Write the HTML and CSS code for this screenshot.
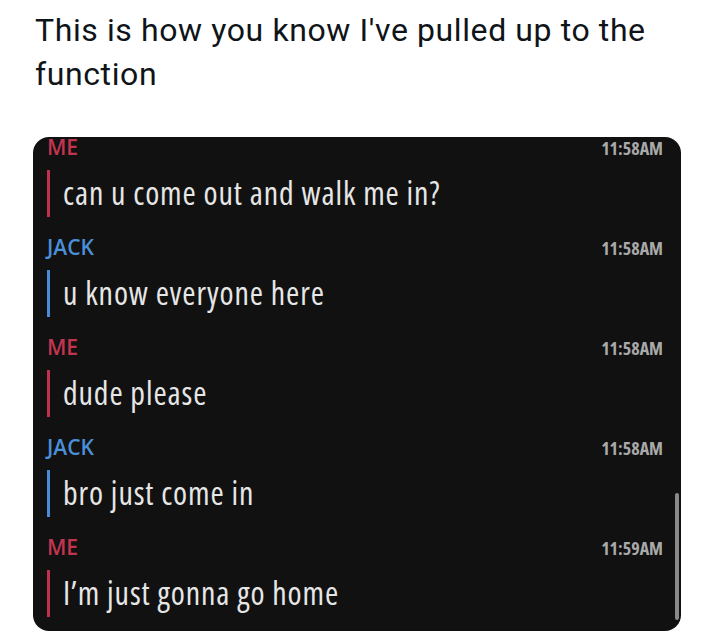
FILE: index.html
```html
<!DOCTYPE html>
<html lang="en">
<head>
    <meta charset="UTF-8">
    <meta name="viewport" content="width=device-width, initial-scale=1.0">
    <title>Pulled up to the function</title>
    <link rel="stylesheet" href="styles.css">
</head>
<body>

<p class="post-text">This is how you know I've pulled up to the function</p>

<!-- Screenshot of the chat -->
<div class="chat">
    <div class="msg me">
        <div class="msg-head"><span class="name">ME</span><span class="time">11:58AM</span></div>
        <p class="msg-body">can u come out and walk me in?</p>
    </div>
    <div class="msg jack">
        <div class="msg-head"><span class="name">JACK</span><span class="time">11:58AM</span></div>
        <p class="msg-body">u know everyone here</p>
    </div>
    <div class="msg me">
        <div class="msg-head"><span class="name">ME</span><span class="time">11:58AM</span></div>
        <p class="msg-body">dude please</p>
    </div>
    <div class="msg jack">
        <div class="msg-head"><span class="name">JACK</span><span class="time">11:58AM</span></div>
        <p class="msg-body">bro just come in</p>
    </div>
    <div class="msg me">
        <div class="msg-head"><span class="name">ME</span><span class="time">11:59AM</span></div>
        <p class="msg-body">I’m just gonna go home</p>
    </div>
    <div class="scrollbar"></div>
</div>

</body>
</html>
```

FILE: styles.css
```css
body {
    margin: 0;
    background-color: #fff;
    color: #0f1419;
    font-family: Roboto, "Noto Sans", sans-serif;
}
.post-text {
    margin: 0;
    padding: 8px 0 0 35px;
    width: 660px;
    font-size: 32px;
    letter-spacing: 0.6px;
    line-height: 44px;
}
.chat {
    position: relative;
    margin: 41px 0 0 33px;
    width: 648px;
    height: 494px;
    box-sizing: border-box;
    padding: 1px 18px 0 14px;
    background-color: #111;
    border-radius: 16px;
    font-family: "Open Sans", "Noto Sans", sans-serif;
}
.msg {
    height: 100px;
}
.msg-head {
    display: flex;
    justify-content: space-between;
    align-items: baseline;
    height: 18px;
    line-height: 18px;
}
.name {
    font-size: 21px;
    font-weight: 600;
}
.time {
    font-size: 18px;
    font-weight: 700;
    font-stretch: 75%;
    color: #a9a9a9;
}
.me .name {
    color: #c4344f;
}
.jack .name {
    color: #4b8fd8;
}
.msg-body {
    margin: 14px 0 0 0;
    padding-left: 13px;
    height: 47px;
    line-height: 45px;
    font-size: 32px;
    font-stretch: 75%;
    letter-spacing: 0.9px;
    color: #e6e6e6;
    border-left: 3px solid #c2304e;
}
.jack .msg-body {
    border-left-color: #4a8cda;
}

/* scroll thumb on the right edge */
.scrollbar {
    position: absolute;
    right: 2px;
    top: 356px;
    width: 4px;
    height: 127px;
    background-color: #8a8a8a;
    border-radius: 2px;
}
```
